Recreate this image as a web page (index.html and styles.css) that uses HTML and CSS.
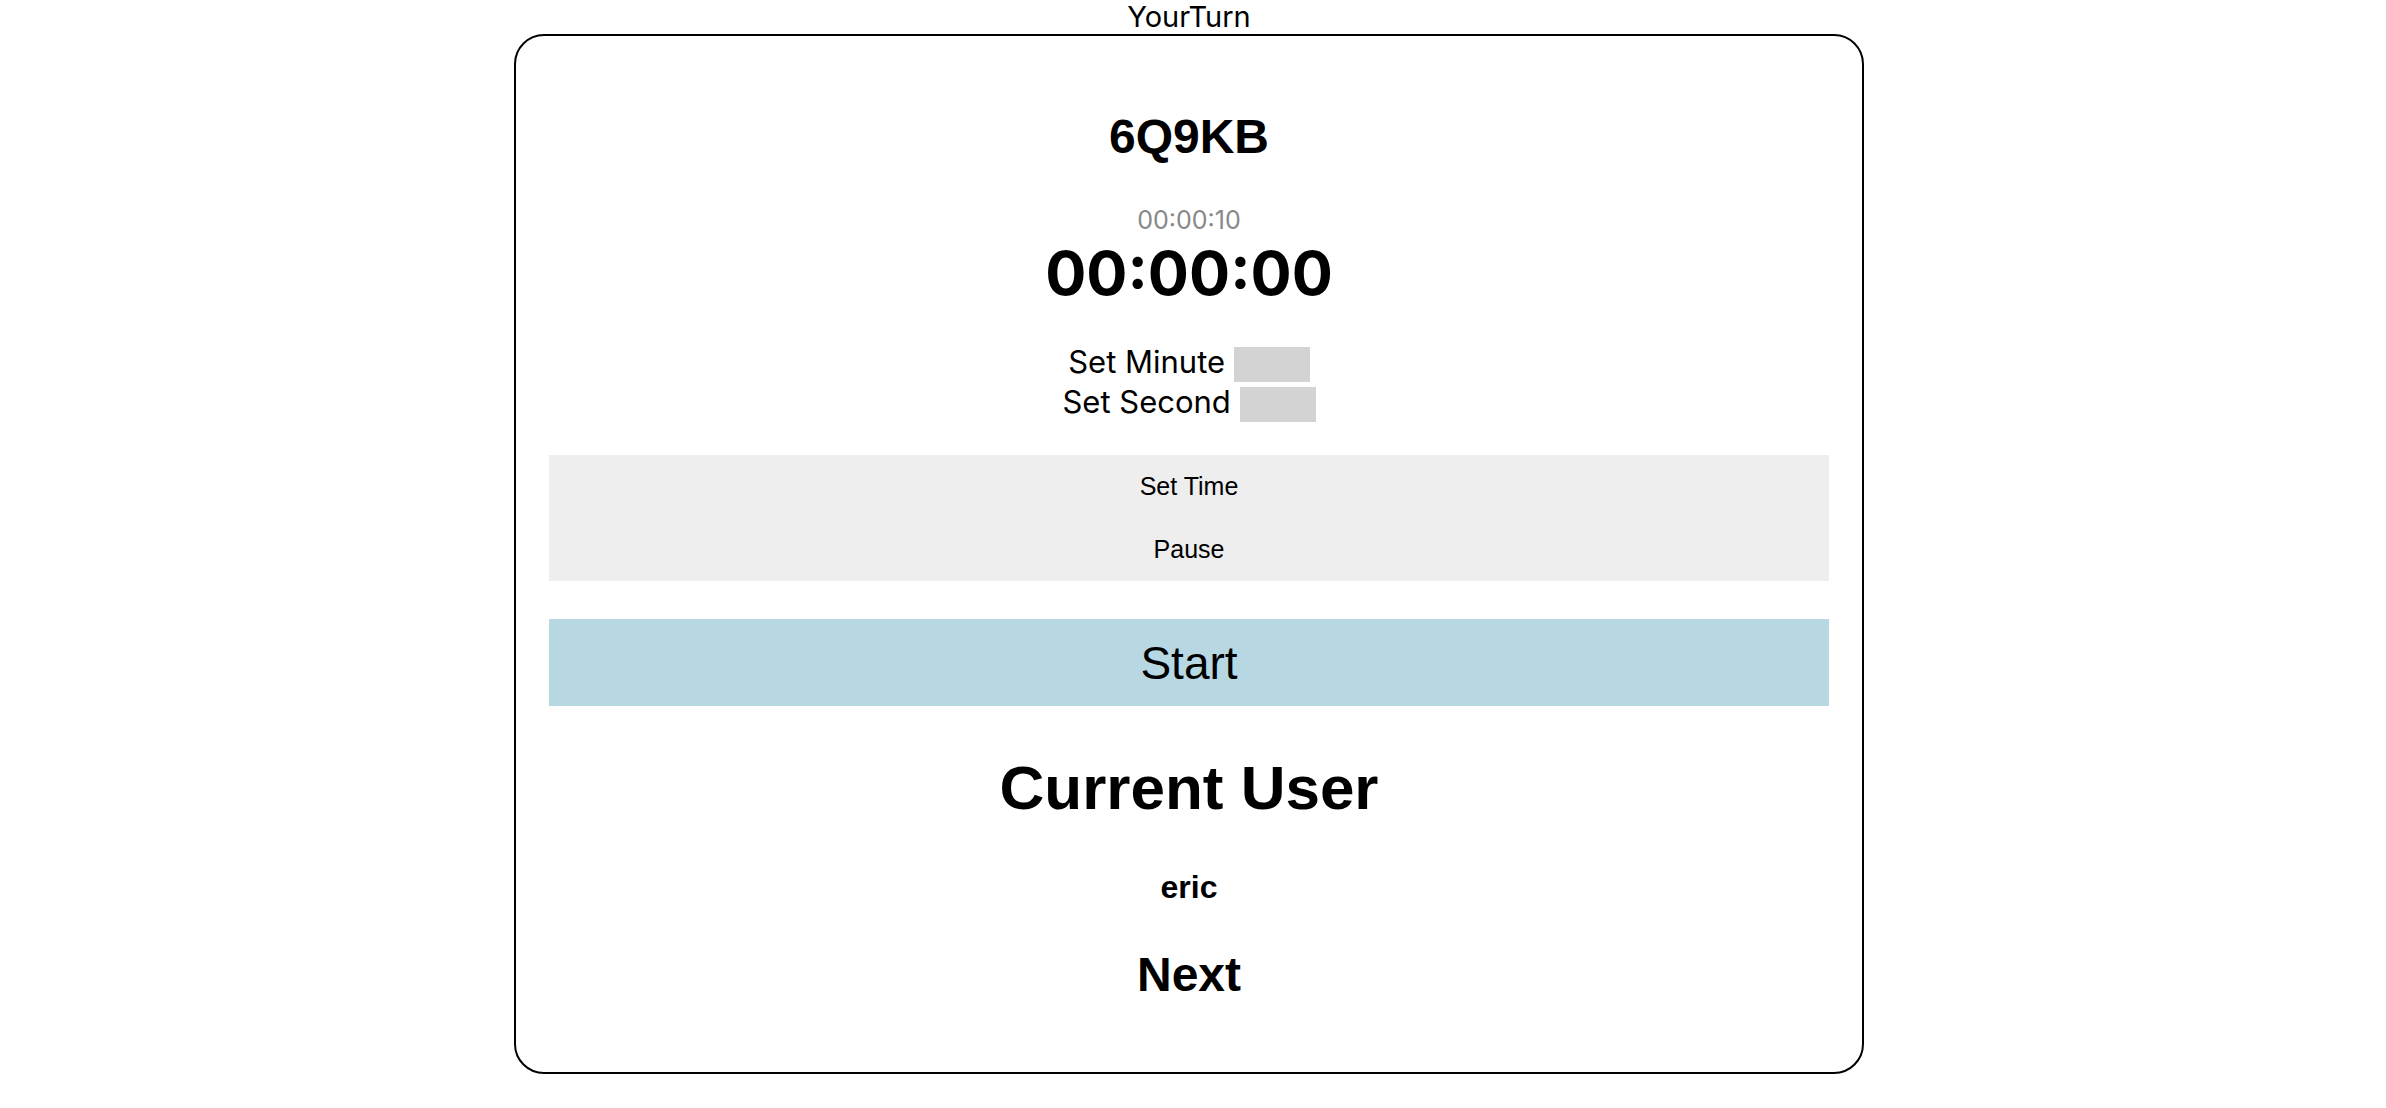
FILE: index.html
```html
<!DOCTYPE html>
<html>
<head>
<meta charset="utf-8">
<title>YourTurn</title>
<link rel="stylesheet" href="styles.css">
</head>
<body>
  <div class="page">
    <div class="app-title">YourTurn</div>
    <main class="card">
      <h2 class="room-code">6Q9KB</h2>
      <div class="timer-set">00:00:10</div>
      <div class="timer">00:00:00</div>
      <div class="time-inputs">
        <label class="time-row">Set Minute <input class="time-field" type="text"></label>
        <label class="time-row">Set Second <input class="time-field" type="text"></label>
      </div>
      <div class="control-group">
        <button class="control-btn">Set Time</button>
        <button class="control-btn">Pause</button>
      </div>
      <button class="start-btn">Start</button>
      <h1 class="current-title">Current User</h1>
      <div class="current-name">eric</div>
      <div class="next-btn">Next</div>
    </main>
  </div>
</body>
</html>
```

FILE: styles.css
```css
html, body {
  margin: 0;
  padding: 0;
  background: #ffffff;
}

.page {
  width: 2378px;
  display: flex;
  flex-direction: column;
  align-items: center;
}

.app-title {
  font-family: "Inter", "Open Sans", sans-serif;
  font-size: 29px;
  line-height: 34px;
  color: #000;
  text-align: center;
}

.card {
  box-sizing: border-box;
  width: 1350px;
  border: 2px solid #000;
  border-radius: 30px;
  padding: 73px 33px 69px 33px;
  display: flex;
  flex-direction: column;
  align-items: stretch;
  text-align: center;
  font-family: "Liberation Sans", Arial, sans-serif;
}

.room-code {
  margin: 0;
  font-family: "Liberation Sans", Arial, sans-serif;
  font-weight: 700;
  font-size: 48px;
  line-height: 56px;
}

.timer-set {
  margin-top: 41px;
  font-family: "Inter", sans-serif;
  font-size: 25px;
  line-height: 29px;
  color: #888888;
}

.timer {
  font-family: "Inter", sans-serif;
  font-weight: 700;
  font-size: 61px;
  line-height: 76px;
  color: #000;
}

.time-inputs {
  margin-top: 31px;
  display: flex;
  flex-direction: column;
  align-items: center;
}

.time-row {
  display: flex;
  align-items: flex-end;
  height: 40px;
  font-family: "Inter", sans-serif;
  font-size: 31px;
  line-height: 40px;
  white-space: pre;
}

.time-field {
  box-sizing: border-box;
  width: 76px;
  height: 35px;
  margin: 0;
  padding: 0;
  border: none;
  background: #d3d3d3;
  outline: none;
}

.control-group {
  margin-top: 33px;
  display: flex;
  flex-direction: column;
  background: #eeeeee;
}

.control-btn {
  display: block;
  width: 100%;
  height: 63px;
  margin: 0;
  padding: 0;
  border: none;
  background: #eeeeee;
  font-family: "Liberation Sans", Arial, sans-serif;
  font-size: 25px;
  color: #000;
}

.start-btn {
  display: block;
  width: 100%;
  height: 87px;
  margin: 38px 0 0 0;
  padding: 0;
  border: none;
  background: #b7d8e3;
  font-family: "Liberation Sans", Arial, sans-serif;
  font-size: 46px;
  color: #000;
}

.current-title {
  margin: 47px 0 0 0;
  font-family: "Liberation Sans", Arial, sans-serif;
  font-weight: 700;
  font-size: 62px;
  line-height: 70px;
}

.current-name {
  margin-top: 45px;
  font-weight: 700;
  font-size: 32px;
  line-height: 38px;
}

.next-btn {
  margin-top: 41px;
  font-weight: 700;
  font-size: 48px;
  line-height: 56px;
}
```
